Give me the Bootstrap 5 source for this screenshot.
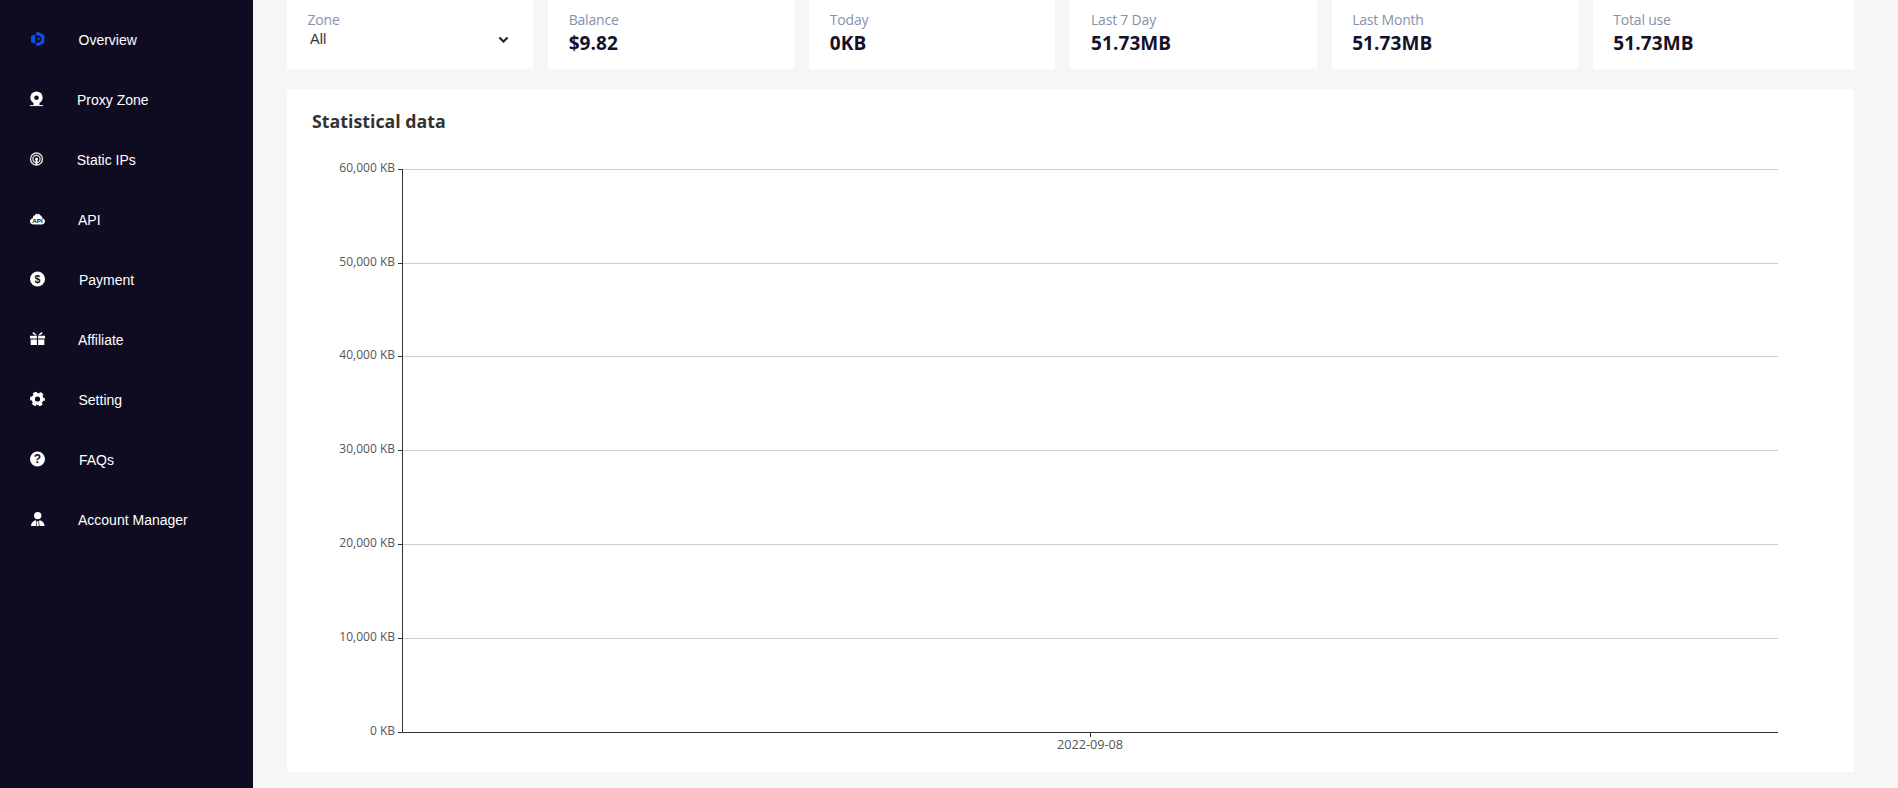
<!DOCTYPE html>
<html lang="en">
<head>
<meta charset="utf-8">
<title>Overview</title>
<link href="https://cdn.jsdelivr.net/npm/bootstrap@5.3.0/dist/css/bootstrap.min.css" rel="stylesheet">
<style>
html,body{height:788px;overflow:hidden}
body{background:#f6f6f6;font-family:"Open Sans","Noto Sans",sans-serif}
.side-panel{width:253px;height:788px;background:#0f0c22;padding-top:10px;flex:none}
.side-link{height:60px;padding-left:30px;gap:32px;color:#fff;font:14px/60px "Liberation Sans",Arial,sans-serif;text-decoration:none}
.side-link svg{flex:none;overflow:visible;margin-top:-2px}
.main-pane{width:1645px;padding:0 44px 16px 34px}
.stat-grid{display:grid;grid-template-columns:repeat(6,1fr);height:69px;margin-bottom:20px}
.stat-cell{padding-right:15px}
.stat-cell:last-child{padding-right:0}
.stat-box{height:69px;background:#fff;padding:10px 20px 0}
.stat-label{font-size:14px;line-height:19px;color:#8492ab;letter-spacing:-.2px;padding-left:.5px}
.stat-value{font-size:19px;line-height:26px;font-weight:700;color:#14122b;letter-spacing:.1px;margin-top:1px;padding-left:.5px}
.zone-select{font:14.500px/18px "Liberation Sans",Arial,sans-serif;color:#333;border:0;border-radius:0;padding:0 0 0 3px;height:18px;margin-top:1px;box-shadow:none;background-size:11px 11px;background-position:right 4px center;background-image:url("data:image/svg+xml,%3csvg xmlns='http://www.w3.org/2000/svg' viewBox='0 0 16 16'%3e%3cpath fill='none' stroke='%23222' stroke-width='3' d='M2 5l6 6 6-6'/%3e%3c/svg%3e")}
.chart-box{background:#fff;height:683px}
.chart-title{font-size:17.800px;line-height:24px;font-weight:700;color:#333;margin:0;padding:20px 25px 0}
.chart-canvas{display:block;margin-top:-44px}
.chart-canvas text{font-family:"Open Sans","Noto Sans",sans-serif;font-size:12px;fill:#555}
.chart-canvas .date-tick{font-size:12.700px}
.grid-line{stroke:#ccc;stroke-width:1}
.axis-line{stroke:#333;stroke-width:1}
</style>
</head>
<body>
<div class="d-flex">
  <nav class="side-panel d-flex flex-column">
    <a class="side-link d-flex align-items-center" href="#">
      <svg width="16.500" height="16" viewBox="0 0 16.500 16" fill="#0b50e8"><path d="M8 .7 14.300 4.300v7.400L8 15.300l-1.700-1V11.500H8c2.300 0 3.400-1.500 3.400-3.500S10.300 4.500 8 4.500H6.300V1.700z"/><path d="M7.700 6.300c1.300 0 1.900.7 1.900 1.700s-.6 1.700-1.900 1.700z"/><path d="M5.300 3 1 5.300v5.400L5.300 13z"/></svg>
      <span>Overview</span></a>
    <a class="side-link d-flex align-items-center" href="#">
      <svg width="15" height="16" viewBox="0 0 15 16"><circle cx="6.500" cy="6.700" r="6.200" fill="#fff"/><circle cx="6.500" cy="6.700" r="2.300" fill="#0f0c22"/><path d="M3.500 12h6v2h-6z" fill="#fff"/><path d="M0 14.600h13" stroke="#fff" stroke-width="1"/></svg>
      <span>Proxy Zone</span></a>
    <a class="side-link d-flex align-items-center" href="#">
      <svg width="14.700" height="16" viewBox="0 0 14.700 16" fill="none" stroke="#ddd"><circle cx="6.500" cy="8" r="6" stroke-width="1.400"/><circle cx="6.500" cy="8" r="3.600" stroke-width="1.300"/><circle cx="6.500" cy="8" r="1.500" fill="#fff" stroke="none"/><path d="M6.500 8v6" stroke="#fff" stroke-width="1.800"/></svg>
      <span>Static IPs</span></a>
    <a class="side-link d-flex align-items-center" href="#">
      <svg width="16" height="16" viewBox="0 0 16 16"><path d="M3.500 13.500C1.300 13.500 0 12.100 0 10.300c0-1.500 1-2.700 2.500-2.900C2.800 5.400 3.700 4.500 5 4.200L6 2.500l1.500 1 1.500-1 1 1.700c1.300.3 2.200 1.200 2.500 3.200 1.500.2 2.500 1.400 2.500 2.900 0 1.800-1.300 3.200-3.500 3.200z" fill="#fff"/><text x="7.500" y="11.900" text-anchor="middle" font-family="Liberation Sans" font-size="6.200" font-weight="700" fill="#0f0c22">API</text></svg>
      <span>API</span></a>
    <a class="side-link d-flex align-items-center" href="#">
      <svg width="17" height="16" viewBox="0 0 17 16"><circle cx="7.500" cy="8" r="7.500" fill="#fff"/><text x="7.500" y="11.600" text-anchor="middle" font-family="Liberation Sans" font-size="10.500" font-weight="700" fill="#0f0c22">$</text></svg>
      <span>Payment</span></a>
    <a class="side-link d-flex align-items-center" href="#">
      <svg width="16" height="16" viewBox="0 0 16 16" fill="#fff"><path d="M0 4.800h6.900v2.700H0zM8.100 4.800H15v2.700H8.100zM.7 8.500h6.200V14H.7zM8.100 8.500h6.200V14H8.100z"/><path d="M7 4.300 3.300 1 2.300 2.200 5 4.300zM8 4.300 11.700 1l1 1.200L10 4.300z"/></svg>
      <span>Affiliate</span></a>
    <a class="side-link d-flex align-items-center" href="#">
      <svg width="16.500" height="16" viewBox="0 0 16.500 16" fill="none" stroke="#fff"><circle cx="7.500" cy="8" r="4.300" stroke-width="3.400"/><circle cx="7.500" cy="8" r="6.200" stroke-width="2.400" stroke-dasharray="3.700 2.790" stroke-dashoffset="1.850"/></svg>
      <span>Setting</span></a>
    <a class="side-link d-flex align-items-center" href="#">
      <svg width="17" height="16" viewBox="0 0 17 16"><circle cx="7.500" cy="8" r="7.500" fill="#fff"/><text x="7.500" y="12.300" text-anchor="middle" font-family="Liberation Sans" font-size="12" font-weight="700" fill="#0f0c22">?</text></svg>
      <span>FAQs</span></a>
    <a class="side-link d-flex align-items-center" href="#">
      <svg width="16" height="16" viewBox="0 0 16 16" fill="#fff"><circle cx="7.700" cy="4.600" r="3.700"/><path d="M1 15c.2-3.300 2-5.200 4.700-5.800l.8.800-.6 5zM14.500 15c-.2-3.300-2-5.200-4.700-5.800l-.8.800.6 5zM7.100 10.300h1.300l.5 4.700H6.600z"/></svg>
      <span>Account Manager</span></a>
  </nav>
  <main class="main-pane">
    <div class="stat-grid">
      <div class="stat-cell"><div class="stat-box"><div class="stat-label">Zone</div>
        <select class="form-select zone-select" aria-label="Zone"><option>All</option></select></div></div>
      <div class="stat-cell"><div class="stat-box"><div class="stat-label">Balance</div><div class="stat-value">$9.82</div></div></div>
      <div class="stat-cell"><div class="stat-box"><div class="stat-label">Today</div><div class="stat-value">0KB</div></div></div>
      <div class="stat-cell"><div class="stat-box"><div class="stat-label">Last 7 Day</div><div class="stat-value">51.73MB</div></div></div>
      <div class="stat-cell"><div class="stat-box"><div class="stat-label">Last Month</div><div class="stat-value">51.73MB</div></div></div>
      <div class="stat-cell"><div class="stat-box"><div class="stat-label">Total use</div><div class="stat-value">51.73MB</div></div></div>
    </div>
    <section class="chart-box">
      <h2 class="chart-title">Statistical data</h2>
      <svg class="chart-canvas" width="1567" height="683" viewBox="287 89 1567 683" role="img" aria-label="Statistical data chart">
        <g class="grid-line">
          <path d="M402 169.500H1778M402 263.500H1778M402 356.500H1778M402 450.500H1778M402 544.500H1778M402 638.500H1778" fill="none"/>
        </g>
        <path class="axis-line" fill="none" d="M402.500 169V732.500H1778M398 169.500H402M398 263.500H402M398 356.500H402M398 450.500H402M398 544.500H402M398 638.500H402M398 732.500H402M1090.500 732V737"/>
        <g text-anchor="end">
          <text x="395" y="172">60,000 KB</text>
          <text x="395" y="266">50,000 KB</text>
          <text x="395" y="359">40,000 KB</text>
          <text x="395" y="453">30,000 KB</text>
          <text x="395" y="547">20,000 KB</text>
          <text x="395" y="641">10,000 KB</text>
          <text x="395" y="735">0 KB</text>
        </g>
        <text class="date-tick" x="1090" y="749" text-anchor="middle">2022-09-08</text>
      </svg>
    </section>
  </main>
</div>
<script src="https://cdn.jsdelivr.net/npm/bootstrap@5.3.0/dist/js/bootstrap.bundle.min.js"></script>
</body>
</html>
